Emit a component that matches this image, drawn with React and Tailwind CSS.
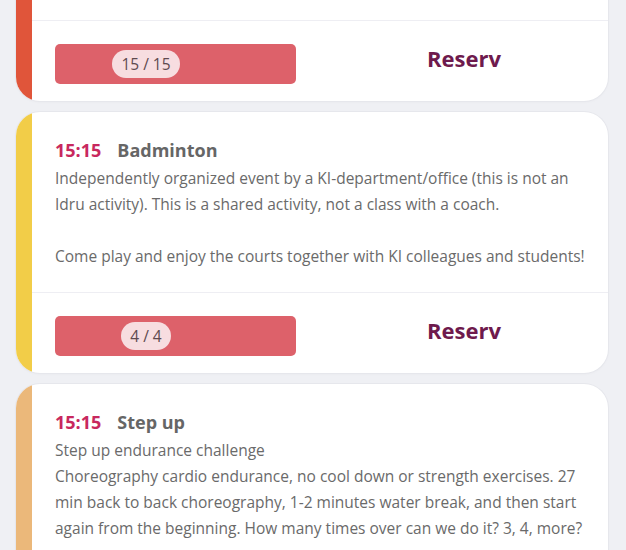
import React from 'react';

const events = [
  {
    // only the bottom of this card is in view
    hidden: true,
    bar: 'bg-[#e0553a]',
    count: '15 / 15',
  },
  {
    time: '15:15',
    title: 'Badminton',
    bar: 'bg-[#f2cd48]',
    lines: [
      'Independently organized event by a KI-department/office (this is not an Idru activity). This is a shared activity, not a class with a coach.',
      '',
      'Come play and enjoy the courts together with KI colleagues and students!',
    ],
    count: '4 / 4',
  },
  {
    time: '15:15',
    title: 'Step up',
    bar: 'bg-[#ebb87a]',
    lines: [
      'Step up endurance challenge',
      'Choreography cardio endurance, no cool down or strength exercises. 27 min back to back choreography, 1-2 minutes water break, and then start again from the beginning. How many times over can we do it? 3, 4, more?',
    ],
    count: '10 / 20',
  },
];

function EventCard({ ev }) {
  return (
    <div className="flex rounded-[24px] overflow-hidden bg-white shadow-[0_0_0_1px_#e6e7ec,0_1px_3px_rgba(0,0,0,0.04)]">
      <div className={`w-[16px] shrink-0 ${ev.bar}`} />
      <div className="flex-1 min-w-0">
        {ev.hidden ? (
          <div className="h-[128px]" />
        ) : (
          <div className="pl-[23px] pr-[20px] pt-[25px] pb-[23px]">
            <div className="flex items-center gap-[16px] text-[18px] leading-[26px] font-bold">
              <span className="text-[#c8285e]">{ev.time}</span>
              <span className="text-[#666666]">{ev.title}</span>
            </div>
            <div className="mt-[2px] text-[15.5px] leading-[26px] text-[#6a6a6a]">
              {ev.lines.map((l, i) => (
                <p key={i} className="min-h-[26px]">{l}</p>
              ))}
            </div>
          </div>
        )}
        <div className="h-px bg-[#eeeef3]" />
        <div className="flex items-start pl-[23px] pt-[23px] pb-[17px]">
          <button className="w-[241px] h-[40px] rounded-[5px] bg-[#dd616a] flex items-center">
            <div className="w-[182px] flex justify-center">
              <span className="h-[28px] px-[9px] rounded-full bg-[#f7dde0] text-[#5e4a4f] text-[15.5px] leading-[28px]">
                {ev.count}
              </span>
            </div>
          </button>
          <div className="flex-1 pl-6 text-center text-[22px] leading-[28px] font-bold text-[#6e1a4d]">Reserv</div>
        </div>
      </div>
    </div>
  );
}

export default function App() {
  return (
    <div className="h-[550px] overflow-hidden bg-[#eff0f4] font-['Open_Sans',sans-serif]">
      <div className="flex flex-col gap-[11px] pl-[16px] pr-[18px] mt-[-108px]">
        {events.map((ev, i) => (
          <EventCard key={i} ev={ev} />
        ))}
      </div>
    </div>
  );
}
